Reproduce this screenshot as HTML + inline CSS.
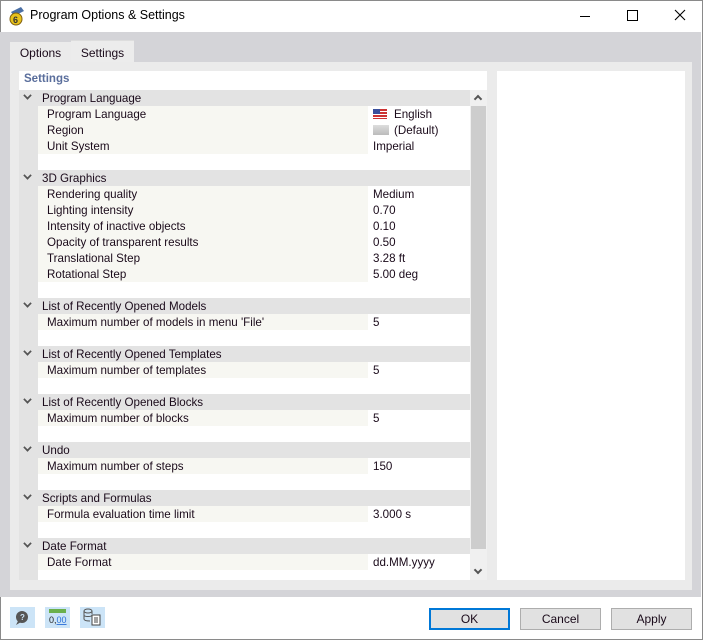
<!DOCTYPE html><html><head><style>
*{margin:0;padding:0;box-sizing:border-box}
body{width:703px;height:640px;overflow:hidden;font-family:"Liberation Sans","DejaVu Sans",sans-serif;font-size:11.6px;color:#1a0a1a;background:#fff;position:relative}
.win{position:absolute;left:0;top:0;width:703px;height:640px;border:1px solid #8a8a8a}
.title{position:absolute;left:30px;top:8px;font-size:12.5px;color:#000}
.frame{position:absolute;left:0;top:32px;width:701px;height:565px;background:#d4d4d8}
.tab{position:absolute;top:40px;height:22px;padding-top:5px;font-size:12px;text-align:center}
.panel{position:absolute;left:10px;top:62px;width:682px;height:528px;background:#ebebeb}
.list{position:absolute;left:19px;top:71px;width:468px;height:509px;background:#fff}
.right{position:absolute;left:497px;top:71px;width:188px;height:509px;background:#fff}
.st{position:absolute;left:24px;top:73px;color:#5a6e9c;font-weight:bold;font-size:11.5px}
.row{position:absolute;left:19px;width:451px;height:16px;line-height:17px}
.g{background:#e3e3e3}
.g span{position:absolute;left:23px}
.g i{position:absolute;left:5px;top:2px;width:7px;height:7px;border-right:2px solid #555;border-bottom:2px solid #555;transform:rotate(45deg) scale(.85)}
.it{background:#fff}
.it .gut{position:absolute;left:0;top:0;width:19px;height:16px;background:#e3e3e3}
.it .lab{position:absolute;left:19px;top:0;width:330px;height:16px;background:#f7f7f2;padding-left:9px}
.it .val{position:absolute;left:354px}
.bl .gut{position:absolute;left:0;top:0;width:19px;height:16px;background:#e3e3e3}
.sb{position:absolute;left:470px;top:90px;width:17px;height:490px;background:#f0f0f0}
.thumb{position:absolute;left:471px;top:106px;width:15px;height:443px;background:#cdcdcd}
.btn{position:absolute;top:608px;width:81px;height:22px;background:#e1e1e1;border:1px solid #adadad;text-align:center;line-height:20px;font-size:12px}
.ib{position:absolute;top:607px;width:25px;height:21px;background:#cce4f7}
</style></head><body>
<div class="win"></div>
<svg style="position:absolute;left:8px;top:6px" width="18" height="20"><path d="M3 6 L13 1 L16 5 L6 10Z" fill="#4a6fa5"/><circle cx="8" cy="13" r="6" fill="#e8c21c" stroke="#806010"/><text x="5" y="17" font-size="9" font-weight="bold" fill="#333" font-family="Liberation Sans">6</text></svg>
<div class="title">Program Options &amp; Settings</div>
<div style="position:absolute;left:580px;top:16px;width:10px;height:1px;background:#000"></div>
<div style="position:absolute;left:627px;top:10px;width:11px;height:11px;border:1px solid #000"></div>
<svg style="position:absolute;left:674px;top:9px" width="12" height="12"><path d="M1 1L11 11M11 1L1 11" stroke="#000" stroke-width="1.1"/></svg>
<div class="frame"></div>
<div class="tab" style="left:10px;width:61px;background:#ebebeb;top:42px;height:20px;padding-top:4px">Options</div>
<div class="tab" style="left:71px;width:63px;background:#ececec;border-top:1px solid #ddd">Settings</div>
<div class="panel"></div>
<div class="list"></div>
<div class="right"></div>
<div class="st">Settings</div>

<div class="row g" style="top:90px"><i></i><span>Program Language</span></div>
<div class="row it" style="top:106px"><div class="gut"></div><div class="lab">Program Language</div><div class="val"><span style="display:inline-block;width:14px;height:10px;vertical-align:-1px;margin-right:7px;background:repeating-linear-gradient(#c33 0 2px,#fff 2px 3px);position:relative"><span style="position:absolute;left:0;top:0;width:7px;height:5px;background:#3a4f9c"></span></span>English</div></div>
<div class="row it" style="top:122px"><div class="gut"></div><div class="lab">Region</div><div class="val"><span style="display:inline-block;width:16px;height:10px;vertical-align:-1px;margin-right:5px;background:linear-gradient(#ddd,#bbb)"></span>(Default)</div></div>
<div class="row it" style="top:138px"><div class="gut"></div><div class="lab">Unit System</div><div class="val">Imperial</div></div>
<div class="row bl" style="top:154px"><div class="gut"></div></div>

<div class="row g" style="top:170px"><i></i><span>3D Graphics</span></div>
<div class="row it" style="top:186px"><div class="gut"></div><div class="lab">Rendering quality</div><div class="val">Medium</div></div>
<div class="row it" style="top:202px"><div class="gut"></div><div class="lab">Lighting intensity</div><div class="val">0.70</div></div>
<div class="row it" style="top:218px"><div class="gut"></div><div class="lab">Intensity of inactive objects</div><div class="val">0.10</div></div>
<div class="row it" style="top:234px"><div class="gut"></div><div class="lab">Opacity of transparent results</div><div class="val">0.50</div></div>
<div class="row it" style="top:250px"><div class="gut"></div><div class="lab">Translational Step</div><div class="val">3.28 ft</div></div>
<div class="row it" style="top:266px"><div class="gut"></div><div class="lab">Rotational Step</div><div class="val">5.00 deg</div></div>
<div class="row bl" style="top:282px"><div class="gut"></div></div>

<div class="row g" style="top:298px"><i></i><span>List of Recently Opened Models</span></div>
<div class="row it" style="top:314px"><div class="gut"></div><div class="lab">Maximum number of models in menu 'File'</div><div class="val">5</div></div>
<div class="row bl" style="top:330px"><div class="gut"></div></div>

<div class="row g" style="top:346px"><i></i><span>List of Recently Opened Templates</span></div>
<div class="row it" style="top:362px"><div class="gut"></div><div class="lab">Maximum number of templates</div><div class="val">5</div></div>
<div class="row bl" style="top:378px"><div class="gut"></div></div>

<div class="row g" style="top:394px"><i></i><span>List of Recently Opened Blocks</span></div>
<div class="row it" style="top:410px"><div class="gut"></div><div class="lab">Maximum number of blocks</div><div class="val">5</div></div>
<div class="row bl" style="top:426px"><div class="gut"></div></div>

<div class="row g" style="top:442px"><i></i><span>Undo</span></div>
<div class="row it" style="top:458px"><div class="gut"></div><div class="lab">Maximum number of steps</div><div class="val">150</div></div>
<div class="row bl" style="top:474px"><div class="gut"></div></div>

<div class="row g" style="top:490px"><i></i><span>Scripts and Formulas</span></div>
<div class="row it" style="top:506px"><div class="gut"></div><div class="lab">Formula evaluation time limit</div><div class="val">3.000 s</div></div>
<div class="row bl" style="top:522px"><div class="gut"></div></div>

<div class="row g" style="top:538px"><i></i><span>Date Format</span></div>
<div class="row it" style="top:554px"><div class="gut"></div><div class="lab">Date Format</div><div class="val">dd.MM.yyyy</div></div>
<div class="row bl" style="top:570px;height:10px"><div class="gut" style="height:10px"></div></div>

<div class="sb"></div><div class="thumb"></div>
<div style="position:absolute;left:475px;top:96px;width:6px;height:6px;border-left:2px solid #555;border-top:2px solid #555;transform:rotate(45deg)"></div>
<div style="position:absolute;left:475px;top:567px;width:6px;height:6px;border-right:2px solid #555;border-bottom:2px solid #555;transform:rotate(45deg)"></div>

<div class="ib" style="left:10px"><svg width="25" height="21"><circle cx="12" cy="10" r="6" fill="#555"/><path d="M8 14 L6 18 L11 15Z" fill="#555"/><text x="10" y="13" font-size="8" fill="#cce4f7" font-weight="bold" font-family="Liberation Sans">?</text></svg></div>
<div class="ib" style="left:45px"><svg width="25" height="21"><rect x="4" y="2" width="17" height="4" fill="#6ab04c"/><text x="4" y="16" font-size="9" fill="#222" font-family="Liberation Sans">0,<tspan fill="#2a6fd8" text-decoration="underline">00</tspan></text></svg></div>
<div class="ib" style="left:80px"><svg width="25" height="21"><ellipse cx="8" cy="4" rx="4" ry="2" fill="none" stroke="#555"/><path d="M4 4v8M12 4v3M4 8c0 2 8 2 8 0M4 12c0 2 4 2 6 2" stroke="#555" fill="none"/><rect x="12" y="8" width="8" height="10" fill="#fff" stroke="#444"/><path d="M14 11h4M14 13h4M14 15h4" stroke="#444"/></svg></div>

<div class="btn" style="left:429px;border:2px solid #0078d7;line-height:18px">OK</div>
<div class="btn" style="left:520px">Cancel</div>
<div class="btn" style="left:611px">Apply</div>
</body></html>
